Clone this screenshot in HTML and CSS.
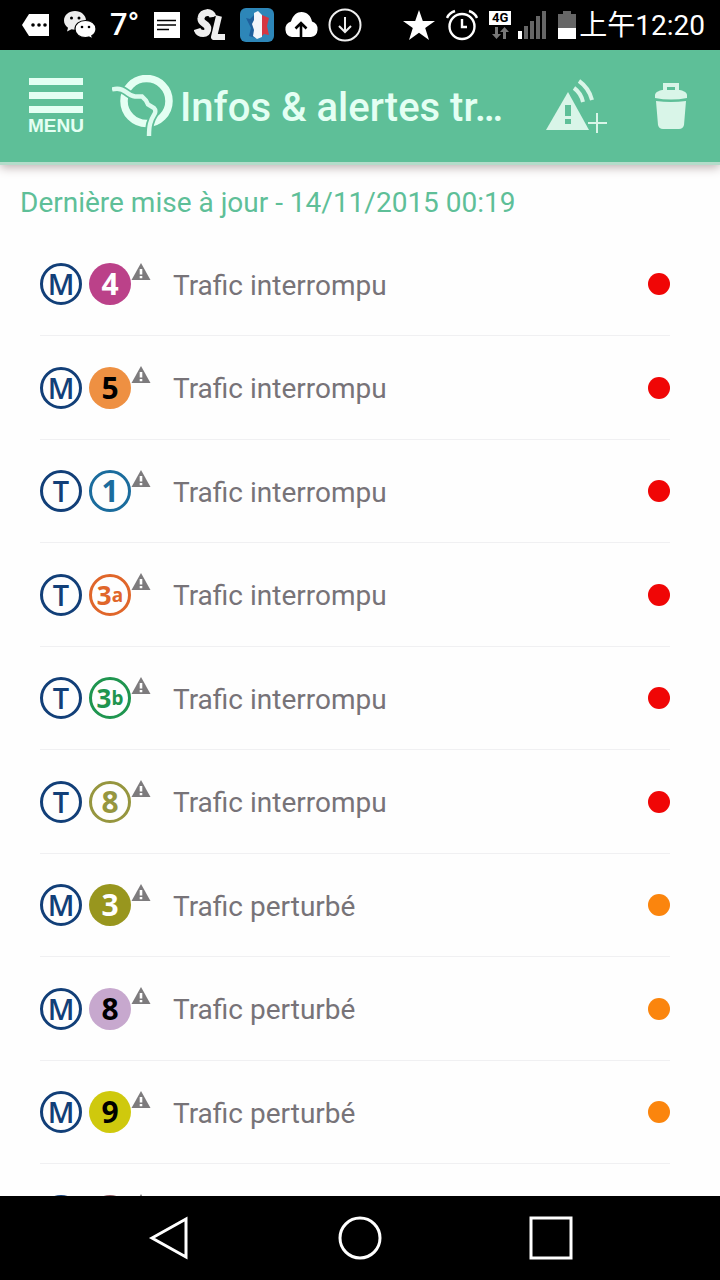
FILE: index.html
```html
<!DOCTYPE html>
<html lang="fr">
<head>
<meta charset="utf-8">
<meta name="viewport" content="width=device-width, initial-scale=1">
<title>Infos &amp; alertes trafic</title>
<link rel="stylesheet" href="styles.css">
</head>
<body>
<svg class="defs" aria-hidden="true">
  <symbol id="warn" viewBox="0 0 20 17">
    <path d="M10 0 19.500 17H.5z" fill="#7d7b7d"/>
    <path d="M8.700 6h2.600v5.500H8.700zM8.700 13h2.600v2.200H8.700z" fill="#fff"/>
  </symbol>
</svg>

<div class="status">
  <div class="status-left">
    <svg width="28" height="24" viewBox="0 0 28 24"><path d="M0 12 7 1h20v22H7z" fill="#fff"/><g fill="#000"><circle cx="11" cy="12" r="1.800"/><circle cx="17" cy="12" r="1.800"/><circle cx="23" cy="12" r="1.800"/></g></svg>
    <svg width="32" height="28" viewBox="0 0 32 28"><path d="M11 0C5 0 0 4 0 9.500c0 3 1.500 5.500 4 7.300L3 20.500l4.500-2.200c1 .3 2.200.5 3.500.5 6 0 11-4 11-9.300S17 0 11 0z" fill="#eee"/><circle cx="7.500" cy="7" r="1.500"/><circle cx="15" cy="7" r="1.500"/><path d="M21.500 9.500C15.500 9.500 11 13 11 18s4.500 8.500 10.500 8.500c1.200 0 2.300-.2 3.300-.5l4 2-1-3.200c2.600-1.600 4.200-4 4.200-6.800 0-5-4.500-8.500-10.500-8.500z" fill="#fff" stroke="#000" stroke-width="1.200"/><circle cx="18" cy="16" r="1.300"/><circle cx="25" cy="16" r="1.300"/></svg>
    <span class="temp">7°</span>
    <svg width="26" height="26" viewBox="0 0 26 26"><path d="M0 0h26v26H0z" fill="#fff"/><path d="M3 8.500h19M3 13h19M3 17.500h12" stroke="#000" stroke-width="1.600"/></svg>
    <svg width="32" height="34" viewBox="0 0 32 34" fill="none" stroke-linejoin="round"><path d="M19 9C18 3 8 3 7 10c-1 6 7 5 7 11 0 6-9 6-11 0" stroke="#eee" stroke-width="7"/><path d="M25 9 20 29h10" stroke="#000" stroke-width="9"/><path d="M25 8 20 29h11" stroke="#eee" stroke-width="6"/></svg>
    <svg width="34" height="34" viewBox="0 0 34 34"><rect width="34" height="34" rx="6" fill="#2d86b8"/><path d="M6 10l4 1 6-6v25l-7-2 2-8z" fill="#1e5f9c"/><path d="M14 5l4-2 4 4v22l-5 2-4-3 1-6-2-6 2-4z" fill="#f3f5fa"/><path d="M22 7l7 3-2 8 2 9-5-1-2 2z" fill="#d53642"/></svg>
    <svg width="34" height="26" viewBox="0 0 34 26"><path d="M8 25a8 8 0 0 1-1-15.500C9 3 13 0 17.500 0 23 0 27 4 28 9.500a8 8 0 0 1-1 15.500z" fill="#fff"/><path d="M17 25V12M11.500 16.500 17 11l5.500 5.500" stroke="#000" stroke-width="2.600" fill="none"/></svg>
    <svg width="34" height="34" viewBox="0 0 34 34" fill="none" stroke="#eee" stroke-width="2"><circle cx="17" cy="17" r="15.500"/><path d="M17 9v15M11 18l6 6 6-6"/></svg>
  </div>
  <div class="status-right">
    <svg width="32" height="30" viewBox="0 0 32 30"><path d="M16 0l3.800 11H32l-9.800 7L26 30l-10-7.200L6 30l3.800-12L0 11h12.200z" fill="#fff"/></svg>
    <svg width="32" height="32" viewBox="0 0 32 32" fill="none" stroke="#fff" stroke-width="2.400"><circle cx="16" cy="17.500" r="12.500"/><path d="M16 10v8h5M1 9Q3 4 9 2M31 9Q29 4 23 2"/></svg>
    <div class="net"><span class="net-tag">4G</span><svg width="20" height="12" viewBox="0 0 20 12" fill="#777"><path d="M5 0h3v7h3l-4.500 5L2 7h3zM13 12h3V5h3l-4.500-5L10 5h3z"/></svg></div>
    <svg class="signal" width="29" height="28" viewBox="0 0 29 28"><path d="M0 20h4v8H0z" fill="#fff"/><path d="M6 15h4v13H6zM12 10h4v18h-4zM18 5h4v23h-4zM24 0h4v28h-4z" fill="#666"/></svg>
    <svg class="battery" width="18" height="28" viewBox="0 0 18 28"><path d="M0 3h5V0h8v3h5v14H0z" fill="#666"/><path d="M0 17h18v11H0z" fill="#fff"/></svg>
    <span class="clock">上午12:20</span>
  </div>
</div>

<header class="bar">
  <button class="menu" type="button"><i class="line"></i><i class="line"></i><i class="line"></i><span>MENU</span></button>
  <svg class="logo" width="62" height="62" viewBox="0 0 62 62" fill="none"><circle cx="34.500" cy="26" r="22.500" stroke="#e4fff3" stroke-width="7.500"/><path d="M0 14.500Q8 12 14 17q5 4 9 4.500h7l4 4 2 4 6 3.500q2 2 1 5c-5 8-6 13-6 23" stroke="#5ebf98" stroke-width="8"/><path d="M0 14.500Q8 12 14 17q5 4 9 4.500h7l4 4 2 4 6 3.500q2 2 1 5c-5 8-6 13-6 23" stroke="#dcfbee" stroke-width="4.400"/></svg>
  <h1>Infos &amp; alertes tr…</h1>
  <button class="icon-button" type="button" aria-label="Ajouter une alerte"><svg width="62" height="54" viewBox="0 0 62 54"><path d="M22 13 43 51H0z" fill="#d9f5e8"/><path d="M19 26h6v11h-6zM19 40h6v5h-6z" fill="#5ebf98"/><g fill="none" stroke="#d9f5e8"><path d="M28 9q7 5 9 14M33 2q10 7 13 19" stroke-width="4"/><path d="M51 34v20M42 44h19" stroke-width="2"/></g></svg></button>
  <button class="icon-button" type="button" aria-label="Supprimer"><svg width="34" height="48" viewBox="0 0 34 48"><path d="M9 9V1h16v8h-4V5h-8v4z" fill="#d9f5e8"/><path d="M1 16v-3c0-3 5-5 9-5h14c4 0 9 2 9 5v3q-16 3-32 0z" fill="#d9f5e8"/><path d="M2 19q15 2 30 0l-2 24q-1 4-5 4H9q-4 0-5-4z" fill="#d9f5e8"/></svg></button>
</header>

<main class="content">
  <p class="updated">Dernière mise à jour - 14/11/2015 00:19</p>
  <ul class="lines">
    <li class="row"><span class="badge mode">M</span><span class="badge m4">4</span><svg class="warn"><use href="#warn"/></svg><span class="label">Trafic interrompu</span><i class="dot red"></i></li>
    <li class="row"><span class="badge mode">M</span><span class="badge m5">5</span><svg class="warn"><use href="#warn"/></svg><span class="label">Trafic interrompu</span><i class="dot red"></i></li>
    <li class="row"><span class="badge mode">T</span><span class="badge t1">1</span><svg class="warn"><use href="#warn"/></svg><span class="label">Trafic interrompu</span><i class="dot red"></i></li>
    <li class="row"><span class="badge mode">T</span><span class="badge t3a">3<small>a</small></span><svg class="warn"><use href="#warn"/></svg><span class="label">Trafic interrompu</span><i class="dot red"></i></li>
    <li class="row"><span class="badge mode">T</span><span class="badge t3b">3<small>b</small></span><svg class="warn"><use href="#warn"/></svg><span class="label">Trafic interrompu</span><i class="dot red"></i></li>
    <li class="row"><span class="badge mode">T</span><span class="badge t8">8</span><svg class="warn"><use href="#warn"/></svg><span class="label">Trafic interrompu</span><i class="dot red"></i></li>
    <li class="row"><span class="badge mode">M</span><span class="badge m3">3</span><svg class="warn"><use href="#warn"/></svg><span class="label">Trafic perturbé</span><i class="dot orange"></i></li>
    <li class="row"><span class="badge mode">M</span><span class="badge m8">8</span><svg class="warn"><use href="#warn"/></svg><span class="label">Trafic perturbé</span><i class="dot orange"></i></li>
    <li class="row"><span class="badge mode">M</span><span class="badge m9">9</span><svg class="warn"><use href="#warn"/></svg><span class="label">Trafic perturbé</span><i class="dot orange"></i></li>
    <li class="row"><span class="badge mode"></span><span class="badge next"></span><svg class="warn"><use href="#warn"/></svg></li>
  </ul>
</main>

<nav class="system">
  <button type="button" aria-label="Retour"><svg width="44" height="44" viewBox="0 0 44 44"><path d="M5 22 39 3v38z"/></svg></button>
  <button type="button" aria-label="Accueil"><svg width="44" height="44" viewBox="0 0 44 44"><circle cx="22" cy="22" r="20"/></svg></button>
  <button type="button" aria-label="Applications"><svg width="44" height="44" viewBox="0 0 44 44"><path d="M2 2h40v40H2z"/></svg></button>
</nav>
</body>
</html>
```

FILE: styles.css
```css
* { box-sizing: border-box; }

body {
  margin: 0;
  height: 100vh;
  display: flex;
  flex-direction: column;
  overflow: hidden;
  background: #fefefe;
  font-family: Roboto, "Noto Sans CJK SC", sans-serif;
}

button {
  padding: 0;
  border: 0;
  background: none;
  color: inherit;
  font: inherit;
}

svg { display: block; flex: none; }
.defs { position: absolute; width: 0; height: 0; }

.status {
  flex: none;
  z-index: 2;
  height: 50px;
  padding: 0 15px 0 22px;
  display: flex;
  align-items: center;
  justify-content: space-between;
  background: #000;
  color: #fff;
}
.status-left { display: flex; align-items: center; gap: 14px; }
.status-right { display: flex; align-items: center; gap: 11px; }
.temp { width: 30px; font-size: 31px; font-weight: 500; line-height: 36px; }
.net { width: 22px; height: 28px; display: flex; flex-direction: column; align-items: center; gap: 2px; }
.net-tag {
  width: 22px;
  background: #fff;
  color: #000;
  font-size: 13px;
  font-weight: 700;
  line-height: 14px;
  text-align: center;
}
.status-left svg:nth-last-child(-n+2) { margin-left: -4px; }
.signal { margin-left: -4px; }
.clock { margin-left: -8px; padding-top: 2px; font-size: 28px; line-height: 36px; white-space: nowrap; }

.bar {
  flex: none;
  z-index: 1;
  height: 115px;
  padding: 0 32px 0 28px;
  display: flex;
  align-items: center;
  background: #5ebf98;
  border-bottom: 3px solid #b4dcca;
  box-shadow: 0 2px 10px #b8aaaa;
  color: #e4fff3;
}
.menu {
  width: 56px;
  padding-top: 2px;
  display: flex;
  flex-direction: column;
  align-items: center;
  gap: 7px;
  font-family: "Liberation Sans", sans-serif;
  font-size: 19px;
  font-weight: 700;
  line-height: 20px;
}
.menu .line { width: 54px; height: 7px; background: #e4fff3; }
.menu span { margin-top: -4px; }
.logo { margin-left: 28px; }
h1 {
  flex: 1;
  margin: 0 0 0 6px;
  padding-top: 4px;
  font-size: 40px;
  font-weight: 500;
  line-height: 48px;
  white-space: nowrap;
}
.icon-button + .icon-button { margin-left: 46px; }

.content { flex: 1; min-height: 0; overflow: hidden; }
.updated {
  margin: 0;
  padding: 21px 20px 13px;
  color: #5ebf98;
  font-size: 28px;
  line-height: 34px;
}
.lines { list-style: none; margin: 0; padding: 0 50px 0 40px; }
.row {
  height: 104px;
  display: flex;
  align-items: center;
  border-bottom: 1px solid #f0f0f2;
}
.row:nth-child(odd) { height: 103px; }

.badge {
  flex: none;
  width: 42px;
  height: 42px;
  display: flex;
  align-items: center;
  justify-content: center;
  border: 3px solid currentColor;
  border-radius: 50%;
  font-family: "Noto Sans", sans-serif;
  font-size: 30px;
  font-weight: 700;
  line-height: 36px;
}
.badge + .badge { margin-left: 7px; }
.badge small { font-size: 19px; }
.mode { color: #123f78; font-size: 29px; font-weight: 600; font-family: "Open Sans", sans-serif; }
.badge.m4, .badge.m5, .badge.m3, .badge.m8, .badge.m9, .badge.next { border: 0; }
.m4 { background: #bb4189; color: #fff; }
.m5 { background: #ee9042; color: #000; }
.m3 { background: #98961e; color: #fff; }
.m8 { background: #c7a8ce; color: #000; }
.m9 { background: #cfc90d; color: #000; }
.next { background: #8d5a60; }
.t1 { color: #1b6c9d; }
.t3a { color: #e0662a; font-size: 26px; }
.t3b { color: #1f954f; font-size: 26px; }
.t8 { color: #96963f; }

.warn { width: 20px; height: 17px; margin-bottom: 26px; }
.label { flex: 1; margin-left: 22px; padding-top: 3px; color: #777378; font-size: 28px; line-height: 34px; }
.dot { width: 22px; height: 22px; border-radius: 50%; }
.red { background: #f00606; }
.orange { background: #fb850d; }

.system {
  flex: none;
  height: 84px;
  padding: 0 147px;
  display: flex;
  align-items: center;
  justify-content: space-between;
  background: #000;
}
.system svg { fill: none; stroke: #fff; stroke-width: 3; }
```
